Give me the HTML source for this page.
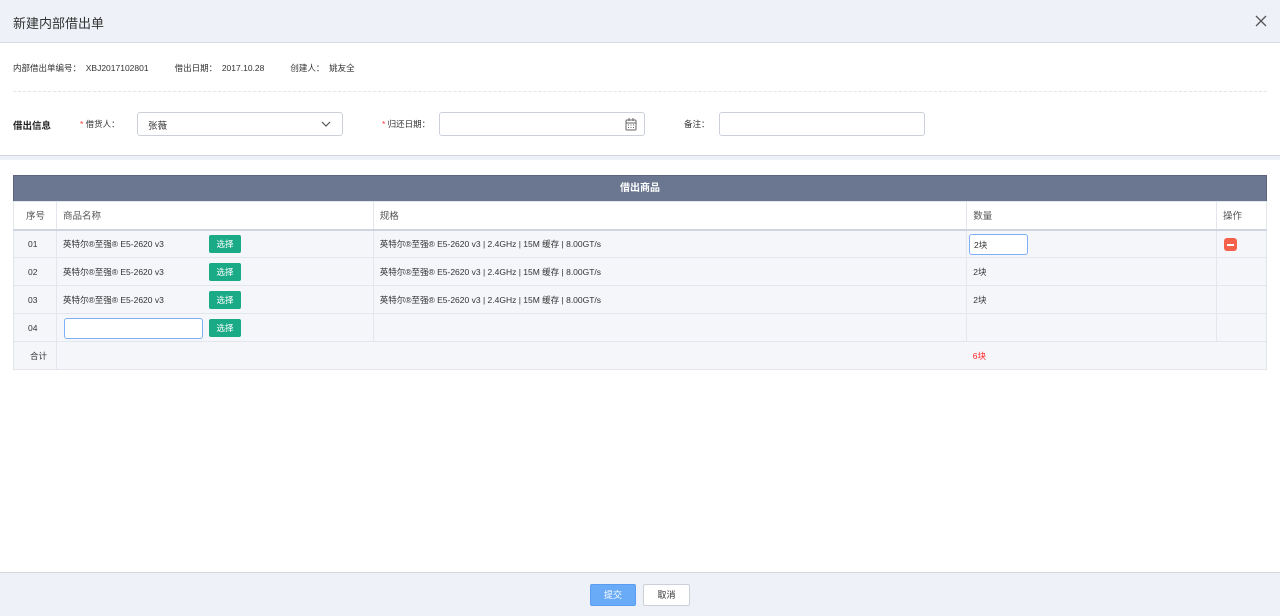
<!DOCTYPE html>
<html><head><meta charset="utf-8"><style>
*{box-sizing:border-box;margin:0;padding:0}
body{width:1280px;height:616px;position:relative;background:#fff;font-family:"Liberation Sans","Noto Sans CJK SC",sans-serif;color:#333;font-size:9px;overflow:hidden}
.a{position:absolute}
.hdr{left:0;top:0;width:1280px;height:43px;background:#eef1f7;border-bottom:1px solid #d6dae3}
.inp{position:absolute;border:1px solid #ccd0d8;border-radius:3px;background:#fff}
table{position:absolute;left:13px;top:201px;width:1254px;border-collapse:collapse;font-size:8.5px}
td{border:1px solid #e3e6ec;height:28px;padding-left:6px;background:#f5f6fa;color:#333}
td:first-child{padding-left:14px}
tr.h td{background:#fff;color:#555;font-size:9.5px;border-bottom:2px solid #cfd4e0}
.btn{position:absolute;width:32px;height:18px;background:#1aab86;border-radius:2px;color:#fff;font-size:8.5px;text-align:center;line-height:18px}
</style></head><body>
<div class="a hdr"></div>
<div class="a" style="left:13px;top:13px;font-size:13px;color:#333">新建内部借出单</div>
<svg class="a" style="left:1255px;top:15px" width="12" height="12"><path d="M1 1L11 11M11 1L1 11" stroke="#555" stroke-width="1.3"/></svg>
<div class="a" style="left:13px;top:62px;font-size:8.5px">内部借出单编号：&nbsp;&nbsp;XBJ2017102801<span style="margin-left:26px">借出日期：&nbsp;&nbsp;2017.10.28</span><span style="margin-left:26px">创建人：&nbsp;&nbsp;姚友全</span></div>
<div class="a" style="left:13px;top:91px;width:1254px;border-top:1px dashed #e3e5ea"></div>
<div class="a" style="left:13px;top:118px;font-size:9.5px;font-weight:bold;color:#222">借出信息</div>
<div class="a" style="left:80px;top:118px;font-size:8.5px"><span style="color:#f33">*</span> 借货人：</div>
<div class="inp" style="left:137px;top:112px;width:206px;height:24px"><span class="a" style="left:10px;top:5px;font-size:9.5px">张薇</span><svg class="a" style="left:183px;top:8px" width="10" height="7"><path d="M1 1L5 5L9 1" stroke="#555" fill="none" stroke-width="1.2"/></svg></div>
<div class="a" style="left:382px;top:118px;font-size:8.5px"><span style="color:#f33">*</span> 归还日期：</div>
<div class="inp" style="left:439px;top:112px;width:206px;height:24px"><svg class="a" style="left:185px;top:5px" width="12" height="13"><rect x="1" y="2" width="10" height="10" rx="1" fill="none" stroke="#666"/><path d="M1 5H11M4 0V3M8 0V3" stroke="#666"/><path d="M3 7h1M5.5 7h1M8 7h1M3 9.5h1M5.5 9.5h1M8 9.5h1" stroke="#666"/></svg></div>
<div class="a" style="left:684px;top:118px;font-size:8.5px">备注：</div>
<div class="inp" style="left:719px;top:112px;width:206px;height:24px"></div>
<div class="a" style="left:0;top:155px;width:1280px;height:5px;background:#eef1f7;border-top:1px solid #d3d7e0"></div>
<div class="a" style="left:13px;top:175px;width:1254px;height:27px;background:#6b7690;border:1px solid #5a6480;color:#fff;font-weight:bold;font-size:10px;text-align:center;line-height:25px">借出商品</div>
<table>
<colgroup><col style="width:43px"><col style="width:317px"><col style="width:594px"><col style="width:250px"><col style="width:50px"></colgroup>
<tr class="h"><td style="padding-left:12px">序号</td><td>商品名称</td><td>规格</td><td>数量</td><td style="padding-left:6px">操作</td></tr>
<tr><td>01</td><td>英特尔®至强® E5-2620 v3</td><td>英特尔®至强® E5-2620 v3 | 2.4GHz | 15M 缓存 | 8.00GT/s</td><td></td><td></td></tr>
<tr><td>02</td><td>英特尔®至强® E5-2620 v3</td><td>英特尔®至强® E5-2620 v3 | 2.4GHz | 15M 缓存 | 8.00GT/s</td><td>2块</td><td></td></tr>
<tr><td>03</td><td>英特尔®至强® E5-2620 v3</td><td>英特尔®至强® E5-2620 v3 | 2.4GHz | 15M 缓存 | 8.00GT/s</td><td>2块</td><td></td></tr>
<tr><td>04</td><td></td><td></td><td></td><td></td></tr>
<tr><td style="padding-left:16px">合计</td><td style="border-right:none"></td><td style="border-left:none;border-right:none"></td><td style="color:#f22;border-left:none;padding-left:6px;border-right:none">6块</td><td style="border-left:none"></td></tr>
</table>
<div class="btn" style="left:209px;top:235px">选择</div>
<div class="btn" style="left:209px;top:263px">选择</div>
<div class="btn" style="left:209px;top:291px">选择</div>
<div class="btn" style="left:209px;top:319px">选择</div>
<div class="inp" style="left:64px;top:318px;width:139px;height:21px;border-color:#7fb0f5"></div>
<div class="inp" style="left:969px;top:234px;width:59px;height:21px;border-color:#7fb0f5;font-size:8.5px;padding:4px 4px">2块</div>
<div class="a" style="left:1224px;top:238px;width:13px;height:13px;background:#f4604a;border-radius:3px"><div class="a" style="left:3px;top:5.5px;width:7px;height:2px;background:#fff"></div></div>
<div class="a" style="left:0;top:572px;width:1280px;height:44px;background:#eef1f7;border-top:1px solid #d3d7e0"></div>
<div class="a" style="left:590px;top:584px;width:46px;height:22px;background:#6aabf8;border:1px solid #5a9cf0;border-radius:2px;color:#fff;font-size:9px;text-align:center;line-height:20px">提交</div>
<div class="a" style="left:643px;top:584px;width:47px;height:22px;background:#fff;border:1px solid #ccd0d8;border-radius:2px;color:#333;font-size:9px;text-align:center;line-height:20px">取消</div>
</body></html>
